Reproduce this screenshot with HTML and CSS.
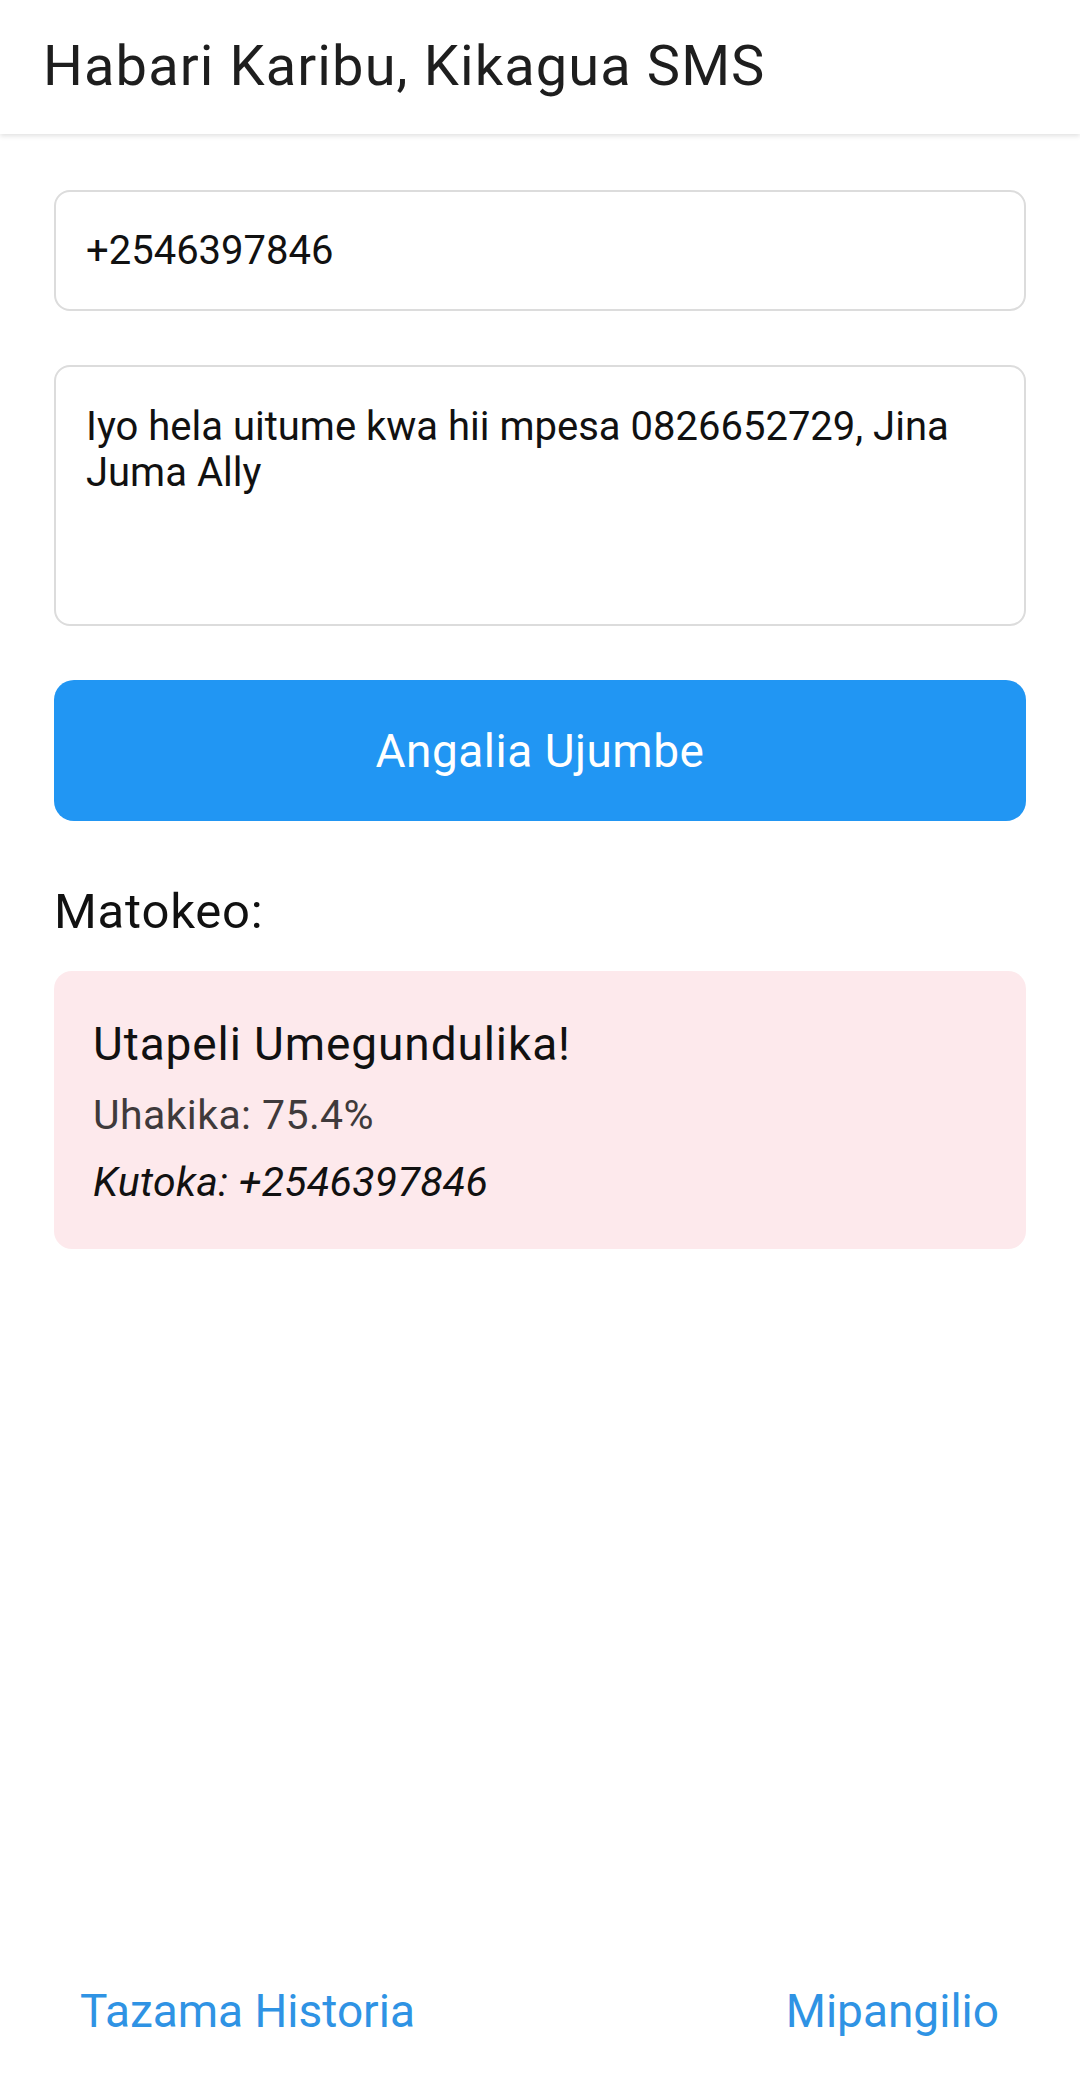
FILE: index.html
```html
<!DOCTYPE html>
<html lang="sw">
<head>
<meta charset="utf-8">
<title>Kikagua SMS</title>
<link rel="stylesheet" href="styles.css">
</head>
<body>
<header class="app-bar">
  <h1 class="app-title">Habari Karibu, Kikagua SMS</h1>
</header>
<main class="content">
  <input class="field phone-field" type="text" value="+2546397846">
  <textarea class="field message-field">Iyo hela uitume kwa hii mpesa 0826652729, Jina Juma Ally</textarea>
  <button class="check-button" type="button">Angalia Ujumbe</button>
  <h2 class="results-label">Matokeo:</h2>
  <section class="result-card">
    <p class="result-title">Utapeli Umegundulika!</p>
    <p class="result-confidence">Uhakika: 75.4%</p>
    <p class="result-sender">Kutoka: +2546397846</p>
  </section>
</main>
<footer class="bottom-links">
  <a class="text-link" href="#">Tazama Historia</a>
  <a class="text-link" href="#">Mipangilio</a>
</footer>
</body>
</html>
```

FILE: styles.css
```css
* {
  box-sizing: border-box;
}

html, body {
  margin: 0;
  padding: 0;
}

body {
  min-height: 2100px;
  display: flex;
  flex-direction: column;
  background: #ffffff;
  font-family: Roboto, "Noto Sans", sans-serif;
  color: #111111;
}

.app-bar {
  height: 134px;
  padding-left: 43px;
  background: #ffffff;
  box-shadow: 0 2px 5px rgba(0, 0, 0, 0.12);
  position: relative;
  z-index: 1;
}

.app-title {
  margin: 0;
  font-size: 56px;
  font-weight: 400;
  line-height: 132px;
  letter-spacing: 1.1px;
  color: #1e1e1e;
}

.content {
  flex: 1;
  display: flex;
  flex-direction: column;
  padding: 56px 54px 0;
}

.field {
  display: block;
  width: 100%;
  border: 2px solid #dcdcdc;
  border-radius: 16px;
  background: #ffffff;
  font-family: Roboto, "Noto Sans", sans-serif;
  font-size: 40px;
  color: #111111;
  outline: none;
  margin: 0;
}

.phone-field {
  height: 121px;
  padding: 0 30px;
}

.message-field {
  height: 261px;
  margin-top: 54px;
  padding: 37px 30px 0;
  line-height: 46px;
  resize: none;
  overflow: hidden;
}

.check-button {
  display: block;
  width: 100%;
  height: 141px;
  margin-top: 54px;
  border: none;
  border-radius: 20px;
  background: #2196f3;
  color: #ffffff;
  font-family: Roboto, "Noto Sans", sans-serif;
  font-size: 46px;
  letter-spacing: 0.5px;
  font-weight: 400;
}

.results-label {
  margin: 62px 0 0;
  font-size: 49px;
  font-weight: 400;
  line-height: 57.6px;
  letter-spacing: 0.8px;
  color: #111111;
}

.result-card {
  margin-top: 30px;
  padding: 45px 39px 41px;
  background: #fde9ec;
  border-radius: 18px;
}

.result-card p {
  margin: 0;
}

.result-title {
  font-size: 46px;
  line-height: 56px;
  letter-spacing: 0.9px;
  color: #111111;
}

.result-confidence {
  margin-top: 17px !important;
  font-size: 41px;
  line-height: 52px;
  letter-spacing: 0.4px;
  color: #3f3a3b;
}

.result-sender {
  margin-top: 15px !important;
  font-size: 41px;
  line-height: 52px;
  letter-spacing: 0.3px;
  font-style: italic;
  color: #111111;
}

.bottom-links {
  display: flex;
  justify-content: space-between;
  padding: 0 81px 61px 80px;
}

.text-link {
  font-size: 46px;
  line-height: 56px;
  color: #2f93e4;
  text-decoration: none;
}
```
